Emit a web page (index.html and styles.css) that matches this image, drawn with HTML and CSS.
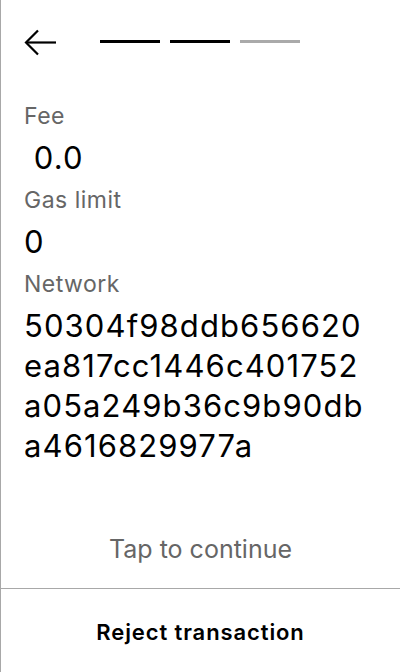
FILE: index.html
```html
<!DOCTYPE html>
<html lang="en">
<head>
<meta charset="utf-8">
<title>Confirm transaction</title>
<link rel="stylesheet" href="styles.css">
</head>
<body>
<div class="screen">
  <header class="header">
    <button class="back" aria-label="Back">
      <svg width="34" height="28" viewBox="0 0 34 28" fill="none" stroke="#000" stroke-width="2.2">
        <path d="M33 13.5H3"/>
        <path d="M15 1.5L3 13.5L15 25.5"/>
      </svg>
    </button>
    <div class="steps">
      <span class="step done"></span>
      <span class="step done"></span>
      <span class="step"></span>
    </div>
  </header>
  <main class="details">
    <div class="label">Fee</div>
    <div class="value">&nbsp;0.0</div>
    <div class="label">Gas limit</div>
    <div class="value">0</div>
    <div class="label">Network</div>
    <div class="value">50304f98ddb656620<br>ea817cc1446c401752<br>a05a249b36c9b90db<br>a4616829977a</div>
  </main>
  <div class="hint">Tap to continue</div>
  <button class="reject">Reject transaction</button>
</div>
</body>
</html>
```
FILE: styles.css
```css
* { box-sizing: border-box; }
html, body { margin: 0; padding: 0; background: #fff; }
body { font-family: Inter, "Noto Sans", sans-serif; color: #000; }
.screen {
  width: 400px;
  height: 672px;
  border-left: 1px solid #a8a8a8;
  display: flex;
  flex-direction: column;
}
.header {
  display: flex;
  align-items: center;
  padding: 29px 0 0 22px;
  height: 57px;
}
.back {
  border: 0;
  background: none;
  padding: 0;
  margin: 0;
  width: 34px;
  height: 28px;
  display: flex;
}
.steps {
  display: flex;
  gap: 10px;
  margin-left: 43px;
  margin-bottom: 3px;
}
.step {
  width: 60px;
  height: 3px;
  background: #aaaaaa;
}
.step.done { background: #000; }
.details {
  flex: 1;
  display: flex;
  flex-direction: column;
  gap: 8px;
  padding: 45px 0 0 23px;
}
.label {
  font-size: 23px;
  line-height: 28px;
  letter-spacing: 0.5px;
  color: #666;
}
.value {
  font-size: 31px;
  line-height: 40px;
  letter-spacing: 1.1px;
  color: #000;
  white-space: nowrap;
}
.hint {
  text-align: center;
  font-size: 25px;
  line-height: 30px;
  color: #666;
  margin-bottom: 24px;
}
.reject {
  border: 0;
  border-top: 1px solid #a8a8a8;
  background: #fff;
  height: 84px;
  padding: 3px 0 0;
  margin: 0;
  font-family: Inter, "Noto Sans", sans-serif;
  font-size: 22px;
  font-weight: 600;
  letter-spacing: 0.9px;
  color: #000;
}
```
